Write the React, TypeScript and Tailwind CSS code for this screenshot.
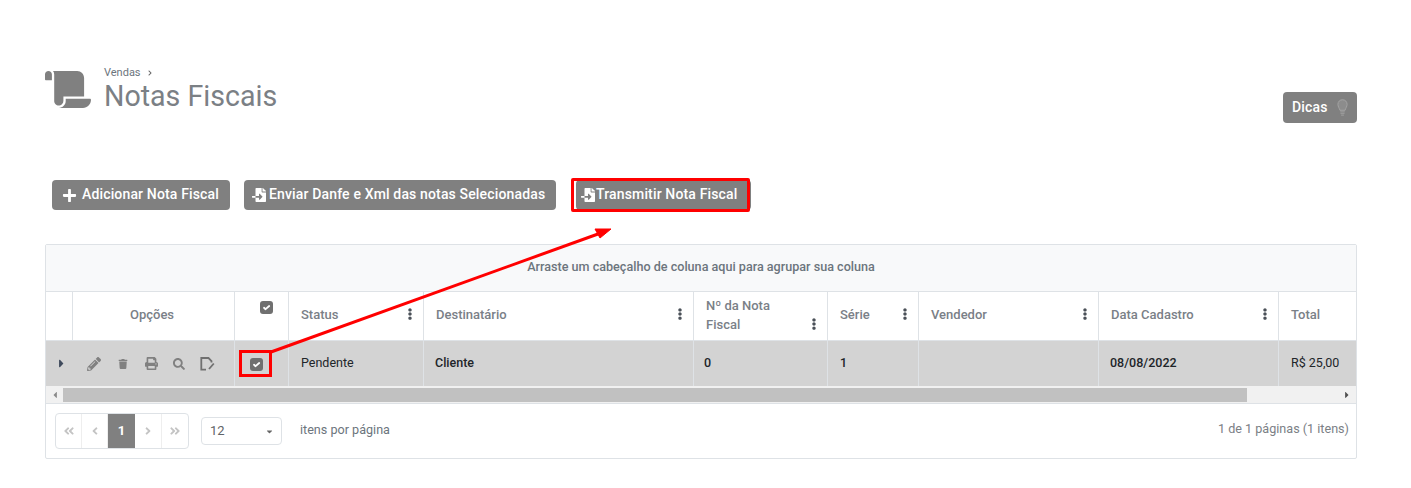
import React from "react";
import { FaScroll, FaPlus, FaFileImport, FaPencilAlt, FaTrash, FaPrint, FaSearch, FaCaretRight, FaCaretLeft, FaCaretDown, FaEllipsisV, FaAngleLeft, FaAngleRight, FaAngleDoubleLeft, FaAngleDoubleRight, FaChevronRight } from "react-icons/fa";

const font = { fontFamily: "Roboto, sans-serif" };

function Check({ className = "" }: { className?: string }) {
  return (
    <svg className={className} width="13" height="13" viewBox="0 0 13 13">
      <rect x="0" y="0" width="13" height="13" rx="3" fill="#707070" />
      <path d="M4 6.800 5.600 8.200 9.200 5" fill="none" stroke="#ffffff" strokeWidth="1.800" strokeLinecap="round" strokeLinejoin="round" />
    </svg>
  );
}

function Btn({ icon, label, className = "" }: { icon: React.ReactNode; label: string; className?: string }) {
  return (
    <div className={"h-[30px] flex items-center rounded bg-[#808080] text-white text-[14px] tracking-[0.15px] font-medium " + className}>
      {icon}
      <span className="pb-[2px]">{label}</span>
    </div>
  );
}

function Head({ w, label, menu = true, two = false, center = false }: { w: string; label?: string; menu?: boolean; two?: boolean; center?: boolean }) {
  return (
    <div className={w + " shrink-0 border-r border-[#dee2e6] relative flex items-center pb-[2px] text-[13px] font-medium text-[#7a8087] " + (center ? "justify-center pr-[3px]" : "pl-3")}>
      {two ? (
        <span className="leading-[19px] w-[80px]">Nº da Nota<br />Fiscal</span>
      ) : (
        <span>{label}</span>
      )}
      {menu && (
        <FaEllipsisV className={"absolute right-[7px] text-[#4a5058] text-[12px] " + (two ? "top-[26px]" : "top-[16px]")} />
      )}
    </div>
  );
}

function Cell({ w, children, className = "" }: { w: string; children?: React.ReactNode; className?: string }) {
  return (
    <div className={w + " shrink-0 border-r border-[#dee2e6] flex items-center text-[12.5px] text-[#212529] " + className}>
      {children}
    </div>
  );
}

function Pg({ children, className = "" }: { children: React.ReactNode; className?: string }) {
  return <div className={"h-full flex items-center justify-center text-[#c4c4c4] text-[12px] border-r border-[#eeeeee] " + className}>{children}</div>;
}

export default function App() {
  return (
    <div className="relative w-[1411px] h-[488px] bg-white overflow-hidden" style={font}>
      <div className="pl-[45px] pr-[54px] pt-[65px]">
        <div className="flex h-[90px]">
          <FaScroll className="text-[#808080] text-[45px] w-[46px] h-[37px] mt-[6px] shrink-0" />
          <div className="ml-[13px]">
            <div className="flex items-center text-[11px] leading-[15px] text-[#6c757d]">
              Vendas <FaChevronRight className="ml-[6px] text-[#666] text-[6px]" />
            </div>
            <div className="text-[28.6px] leading-[32px] text-[#7b8085]">Notas Fiscais</div>
          </div>
          <div className="ml-auto mt-[27px] w-[74px] h-[31px] rounded bg-[#808080] flex items-center pl-[9px] text-white text-[14px] tracking-[0.15px] font-medium">
            Dicas
            <svg className="ml-[9px]" width="11" height="20" viewBox="0 0 12 20">
              <path d="M6 1C3 1 1 3.200 1 6c0 2.400 1.500 4 2.200 6.500h5.600C9.500 10 11 8.400 11 6c0-2.800-2-5-5-5Z" fill="#8c8c8c" stroke="#a5a5a5" strokeWidth="1" />
              <path d="M3.500 14.200h5M3.800 16h4.400M4.500 17.800h3" stroke="#999999" strokeWidth="1.200" fill="none" />
            </svg>
          </div>
        </div>
        <div className="flex items-center h-[32px] mt-[24px] pl-[7px]">
          <Btn className="w-[178px] pl-[10px]" icon={<FaPlus className="text-[15px] mr-[5px]" />} label="Adicionar Nota Fiscal" />
          <Btn className="w-[312px] ml-[14px] pl-[8px]" icon={<FaFileImport className="text-[14px] mr-[3px]" />} label="Enviar Danfe e Xml das notas Selecionadas" />
          <Btn className="w-[175px] ml-[20px] pl-[5px]" icon={<FaFileImport className="text-[14px] mr-[1px]" />} label="Transmitir Nota Fiscal" />
        </div>
        <div className="mt-[33px] h-[215px] border border-[#dee2e6] rounded-[2px] flex flex-col">
          <div className="h-[47px] shrink-0 bg-[#f8f9fa] border-b border-[#dee2e6] flex items-center justify-center pb-[1px] text-[12.6px] font-medium text-[#6c757d]">
            Arraste um cabeçalho de coluna aqui para agrupar sua coluna
          </div>
          <div className="h-[49px] shrink-0 flex border-b border-[#dee2e6]">
            <Head w="w-[27px]" menu={false} />
            <Head w="w-[162px]" label="Opções" menu={false} center />
            <div className="w-[54px] shrink-0 border-r border-[#dee2e6] flex justify-center pt-[9px] pl-[10px]">
              <Check />
            </div>
            <Head w="w-[135px]" label="Status" />
            <Head w="w-[270px]" label="Destinatário" />
            <Head w="w-[134px]" two />
            <Head w="w-[91px]" label="Série" />
            <Head w="w-[180px]" label="Vendedor" />
            <Head w="w-[180px]" label="Data Cadastro" />
            <div className="flex-1 flex items-center pb-[2px] pl-3 text-[13px] font-medium text-[#7a8087]">Total</div>
          </div>
          <div className="h-[45px] shrink-0 flex bg-[#d3d3d3]">
            <div className="w-[27px] shrink-0 flex items-center justify-center text-[#3f4a5c] text-[13px] pl-[4px]"><FaCaretRight /></div>
            <div className="w-[162px] shrink-0 border-r border-[#dee2e6] flex items-center pl-[14px] text-[#808080]">
              <FaPencilAlt className="text-[14px]" />
              <FaTrash className="text-[10px] ml-[17px]" />
              <FaPrint className="text-[13px] ml-[17px]" />
              <FaSearch className="text-[12px] ml-[15px]" />
              <svg className="ml-[15px]" width="15" height="14" viewBox="0 0 15 14" fill="none" stroke="#707070" strokeWidth="1.800">
                <path d="M6 12.700H1.300V1H8.500L11.500 4V5.500" />
                <path d="M13.800 6.500 9 12" />
              </svg>
            </div>
            <div className="w-[54px] shrink-0 border-r border-[#dee2e6] flex items-center justify-center pr-[10px] pt-[2px]">
              <Check />
            </div>
            <Cell w="w-[135px] pl-3">Pendente</Cell>
            <Cell w="w-[270px] pl-[11px]" className="font-medium">Cliente</Cell>
            <Cell w="w-[134px] pl-[10px]" className="font-medium">0</Cell>
            <Cell w="w-[91px] pl-3" className="font-medium">1</Cell>
            <Cell w="w-[180px] pl-3"></Cell>
            <Cell w="w-[180px] pl-[11px]" className="font-medium">08/08/2022</Cell>
            <div className="flex-1 flex items-center pl-3 text-[12.5px] text-[#212529]">R$ 25,00</div>
          </div>
          <div className="h-[18px] shrink-0 bg-[#f1f1f1] border-b border-[#dee2e6] flex items-center py-[1px]">
            <div className="w-[17px] flex justify-center text-[#8a8a8a] text-[10px]"><FaCaretLeft /></div>
            <div className="w-[1184px] h-[14px] bg-[#c1c1c1]" />
            <div className="flex-1 flex justify-end pr-[4px] text-[#505050] text-[10px]"><FaCaretRight /></div>
          </div>
          <div className="flex-1 flex items-center pl-[9px] pr-[7px] pb-[1px]">
            <div className="w-[134px] h-[36px] border border-[#dee2e6] rounded flex items-center overflow-hidden">
              <Pg className="w-[26px]"><FaAngleDoubleLeft /></Pg>
              <Pg className="w-[26px]"><FaAngleLeft /></Pg>
              <div className="w-[27px] h-full bg-[#808080] flex items-center justify-center text-white text-[13px] font-bold">1</div>
              <Pg className="w-[27px]"><FaAngleRight /></Pg>
              <Pg className="w-[26px] border-r-0"><FaAngleDoubleRight /></Pg>
            </div>
            <div className="ml-[12px] w-[81px] h-[28px] mt-[1px] border border-[#dee2e6] rounded flex items-center pl-[8px] pr-[7px] text-[13px] text-[#5f6468]">
              12
              <FaCaretDown className="ml-auto text-[9px] text-[#666]" />
            </div>
            <span className="ml-[18px] text-[12.6px] text-[#6c757d]">itens por página</span>
            <span className="ml-auto text-[12.6px] text-[#7b8085] -mt-[2px]">1 de 1 páginas (1 itens)</span>
          </div>
        </div>
      </div>
      {/* annotations */}
      <div className="absolute left-[571px] top-[178px] w-[179px] h-[34px] border-[3px] border-[#ff0000] rounded-[2px]" />
      <div className="absolute left-[239px] top-[350px] w-[33px] h-[27px] border-[3px] border-[#ff0000]" />
      <svg className="absolute left-0 top-0" width="1411" height="488" fill="none">
        <path d="M271 352 L598 234" stroke="#ff0000" strokeWidth="3" />
        <path d="M611 229 L595 229 L600 238 Z" fill="#ff0000" stroke="#ff0000" />
      </svg>
    </div>
  );
}
